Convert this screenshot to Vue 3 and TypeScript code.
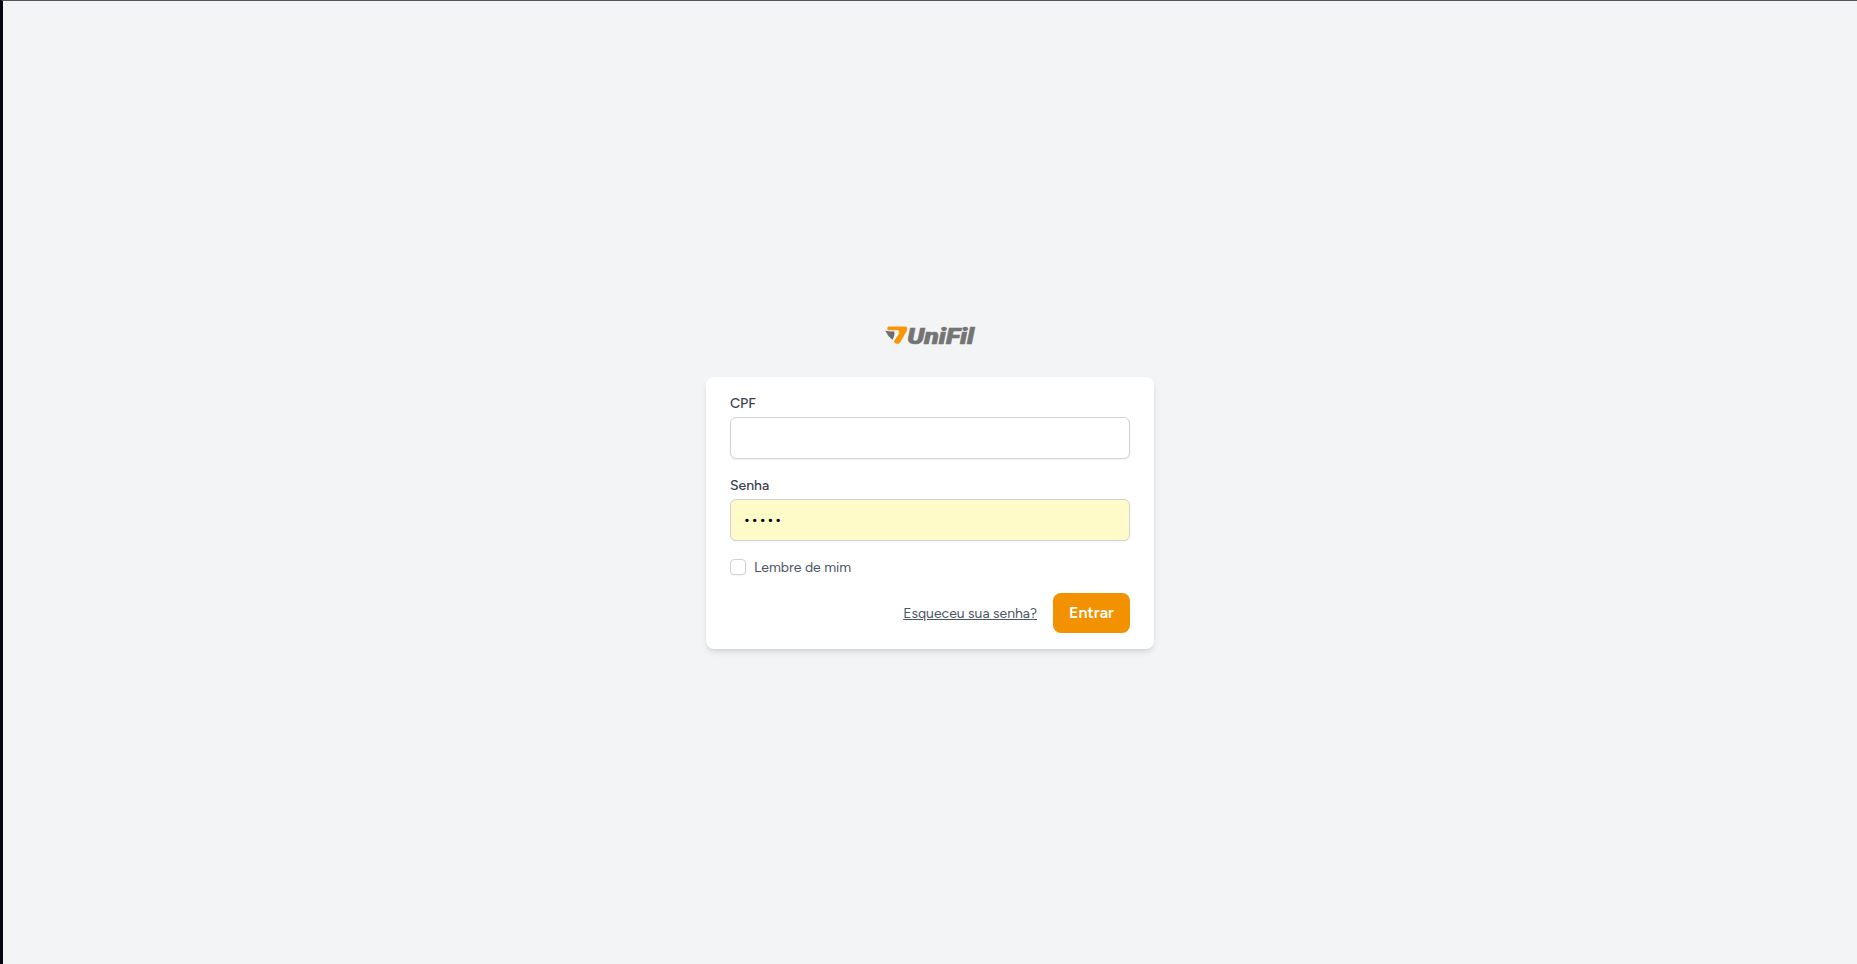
<script setup lang="ts">
import { ref } from 'vue'

const cpf = ref('')
const password = ref('senha')
const remember = ref(false)
</script>

<template>
  <main class="page">
    <svg class="logo" viewBox="0 0.6 92 24" role="img" aria-label="UniFil">
      <path class="orange" d="M4.4 3.1H20.5Q24.2 3.3 23 6.4Q22.5 8.4 20.7 11.2L16.3 18.8Q15 20.8 12.7 20.3Q9 19.6 10.6 16.8L15.8 9.2L13.6 9.6Q16.6 7.2 13.6 6.9H4.4Q2 5.2 4.4 3.1Z" />
      <path class="grey" d="M1.1 7Q5.8 8.3 10 7.9L10.6 10.2Q10.2 13.4 8.4 16.5Q3.8 12.7 1.1 7Z" />
      <text class="wordmark" x="23.2" y="20.2" textLength="67" lengthAdjust="spacingAndGlyphs">UniFil</text>
    </svg>

    <form class="card" @submit.prevent>
      <div class="field">
        <label for="cpf">CPF</label>
        <input id="cpf" v-model="cpf" type="text" autocomplete="off" />
      </div>
      <div class="field">
        <label for="password">Senha</label>
        <input id="password" v-model="password" class="filled" type="password" />
      </div>
      <label class="remember">
        <input v-model="remember" type="checkbox" />
        <span>Lembre de mim</span>
      </label>
      <div class="actions">
        <a href="#">Esqueceu sua senha?</a>
        <button type="submit">Entrar</button>
      </div>
    </form>
  </main>
</template>

<style>
body {
  margin: 0;
}
</style>

<style scoped>
.page {
  box-sizing: border-box;
  height: 100vh;
  display: flex;
  flex-direction: column;
  align-items: center;
  padding-top: 323px;
  border-top: 1px solid #55515f;
  border-left: 3px solid #050711;
  background: #f3f4f6;
  font-family: Figtree, Inter, sans-serif;
  font-size: 14px;
  line-height: 20px;
}
.logo {
  width: 92px;
  height: 24px;
  margin-bottom: 29px;
  flex: none;
  overflow: visible;
}
.orange { fill: #f79708; }
.grey { fill: #706f6f; }
.wordmark {
  fill: #757474;
  stroke: #757474;
  stroke-width: 0.7;
  font: italic 900 22.8px Roboto, sans-serif;
}
.card {
  box-sizing: border-box;
  width: 448px;
  padding: 16px 24px;
  display: flex;
  flex-direction: column;
  gap: 16px;
  background: #fff;
  border-radius: 8px;
  box-shadow: 0 4px 6px -1px rgb(0 0 0 / 0.1), 0 2px 4px -2px rgb(0 0 0 / 0.1);
}
.field {
  display: flex;
  flex-direction: column;
  gap: 4px;
}
.field label {
  padding-top: 2px;
  color: #374151;
  font-weight: 500;
  line-height: 18px;
}
.field input {
  box-sizing: border-box;
  width: 100%;
  height: 42px;
  padding: 7px 12px 9px;
  border: 1px solid #d1d1db;
  border-radius: 6px;
  outline: none;
  background: #fff;
  box-shadow: 0 1px 2px rgb(0 0 0 / 0.05);
  font: 16px/24px Figtree, Inter, sans-serif;
  color: #000;
}
.field .filled {
  background: #fffbc8;
}
.remember {
  display: flex;
  align-items: center;
  gap: 8px;
  color: #4b5563;
}
.remember span {
  padding-top: 2px;
  line-height: 18px;
}
.remember input {
  appearance: none;
  box-sizing: border-box;
  width: 16px;
  height: 16px;
  margin: 0;
  border: 1px solid #d1d1db;
  border-radius: 4px;
  background: #fff;
  box-shadow: 0 1px 2px rgb(0 0 0 / 0.05);
}
.actions {
  display: flex;
  align-items: center;
  justify-content: flex-end;
  gap: 16px;
}
.actions a {
  padding-top: 2px;
  color: #4b5563;
}
.actions button {
  box-sizing: border-box;
  width: 77px;
  height: 40px;
  padding: 0;
  border: 0;
  border-radius: 8px;
  background: #f39200;
  color: #fff;
  font: 600 16px/24px Figtree, Inter, sans-serif;
}
</style>
